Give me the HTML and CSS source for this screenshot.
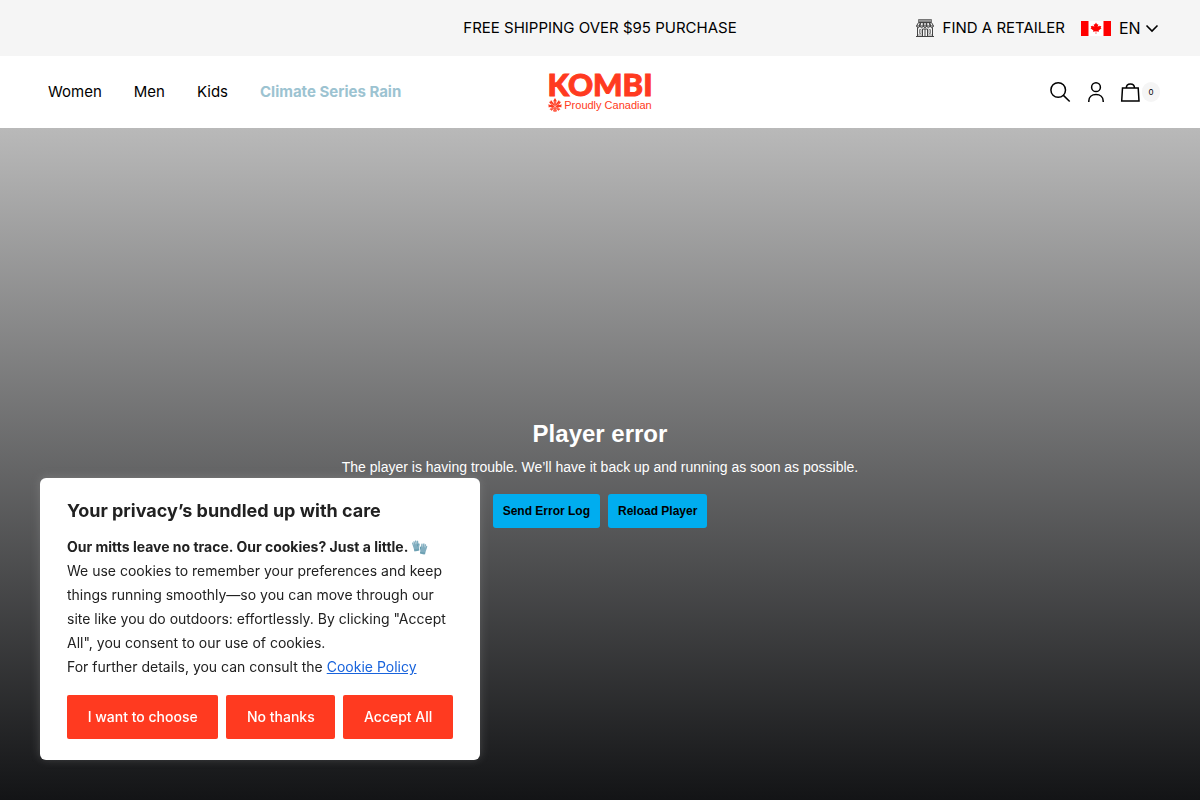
FILE: index.html
```html
<!DOCTYPE html>
<html lang="en">
<head>
  <meta charset="UTF-8">
  <meta name="viewport" content="width=device-width, initial-scale=1.0">
  <title>Kombi</title>
  <link rel="stylesheet" href="styles.css">
</head>
<body>
  <div class="top-bar">
    <p class="announcement">FREE SHIPPING OVER $95 PURCHASE</p>
    <div class="top-links">
      <a class="retailer" href="#">
        <svg class="icon-store" viewBox="0 0 20 20" fill="none" stroke="#444">
          <path d="M3.500 1.500h13v2.500h-13z" fill="#999" stroke="#777"/>
          <path d="M3.500 4.500L1.500 8h17L16.500 4.500z" fill="#eee"/>
          <path d="M5.500 5l-1 3M8.500 5v3M11.500 5v3M14.500 5l1 3" stroke-width="1.600"/>
          <path d="M1.500 8q1.700 3.500 3.400 0q1.700 3.500 3.400 0q1.700 3.500 3.400 0q1.700 3.500 3.400 0q1.700 3.500 3.400 0"/>
          <path d="M2.500 9.500v9M17.500 9.500v9M1 18.500h18M7.500 18v-7h5v7M10 11v7"/>
          <path d="M4.500 11.500h1.500v4H4.500zM14 11.500h1.500v4H14zM3 17h4M13 17h4" stroke="#888"/>
        </svg>
        <span>FIND A RETAILER</span>
      </a>
      <div class="language">
        <svg class="flag" viewBox="0 0 30 15">
          <path fill="#fff" d="M0 0h30v15H0z"/>
          <path fill="#f00" d="M0 0h7.500v15H0zM22.500 0H30v15h-7.500z"/>
          <path fill="#f00" d="M15 1.400l-1.100 2.100-1.200-.6.600 3.100-1.500-1.600-.4.900-1.700-.3.600 1.800-.8.500 2.900 2.300-.4 1.100 2.800-.4-.1 2.800h.6l-.1-2.800 2.800.4-.4-1.100 2.900-2.300-.8-.5.600-1.800-1.700.3-.4-.9L16.700 6l.6-3.100-1.200.6z"/>
        </svg>
        <select class="language-select" aria-label="Language">
          <option>EN</option>
          <option>FR</option>
        </select>
        <svg class="chevron" viewBox="0 0 14 14" fill="none" stroke="#000" stroke-width="1.600"><path d="M1.500 4.500L7 10l5.500-5.500"/></svg>
      </div>
    </div>
  </div>

  <header class="header">
    <nav class="nav">
      <a href="#">Women</a>
      <a href="#">Men</a>
      <a href="#">Kids</a>
      <a class="featured" href="#">Climate Series Rain</a>
    </nav>
    <a class="logo" href="#">
      <span class="logo-name">KOMBI</span>
      <span class="logo-tagline">
        <svg class="leaf" viewBox="0 0 14 14" fill="#ff3a20">
          <path d="M7 0l1.500 2.500L8 6l3-4 .5 1.500L13 4l-2.500 3 3.500-.5-.8 1.500.5 1.200L10 9l2.500 2.500-1.500.3-.5 1.200L8 10l1 3.500-1-.3-1 .8-1-.8-1 .3L6 10l-2.500 3-.5-1.200-1.500-.3L4 9 .3 9.200.8 8 0 6.500l3.500.5L1 4l1.500-.5L3 2l3 4-.5-3.500z"/>
          <path d="M7 3v10M7 8.500L3 5.500M7 8.500l4-3M7 8.500l-4 2.500M7 8.500l4 2.500" fill="none" stroke="#fff" stroke-width=".4"/>
        </svg>
        Proudly Canadian
      </span>
    </a>
    <div class="tools">
      <a href="#" aria-label="Search">
        <svg viewBox="0 0 24 24"><circle cx="10.200" cy="10" r="7.300"/><path d="M15.400 15.400L21.700 21.500"/></svg>
      </a>
      <a href="#" aria-label="Account">
        <svg viewBox="0 0 24 24"><circle cx="12" cy="7.200" r="4.400"/><path d="M4.800 22v-1c0-4 3-6.500 7.200-6.500s7.200 2.500 7.200 6.500v1"/></svg>
      </a>
      <a class="cart" href="#" aria-label="Cart">
        <svg viewBox="0 0 22 24"><path d="M2.500 8h15.700l.8 13H1.700zM6.300 8c0-5.500 8.200-5.500 8.200 0"/></svg>
        <span class="cart-count">0</span>
      </a>
    </div>
  </header>

  <main class="hero">
    <h2 class="error-title">Player error</h2>
    <p class="error-text">The player is having trouble. We’ll have it back up and running as soon as possible.</p>
    <div class="error-actions">
      <button type="button">Send Error Log</button>
      <button type="button">Reload Player</button>
    </div>
  </main>

  <section class="consent" aria-label="Cookie consent">
    <h2 class="consent-title">Your privacy’s bundled up with care</h2>
    <div class="consent-text">
      <p><strong>Our mitts leave no trace. Our cookies? Just a little. 🧤</strong></p>
      <p>We use cookies to remember your preferences and keep things running smoothly—so you can move through our site like you do outdoors: effortlessly. By clicking "Accept All", you consent to our use of cookies.</p>
      <p>For further details, you can consult the <a href="#">Cookie Policy</a></p>
    </div>
    <div class="consent-actions">
      <button type="button">I want to choose</button>
      <button type="button">No thanks</button>
      <button type="button">Accept All</button>
    </div>
  </section>
</body>
</html>
```
FILE: styles.css
```css
* {
  box-sizing: border-box;
}
body {
  margin: 0;
  min-height: 100vh;
  display: flex;
  flex-direction: column;
  font-family: Inter, sans-serif;
  font-size: 15px;
  line-height: 20px;
  color: #000;
}
p, h2 {
  margin: 0;
}
a {
  color: inherit;
  text-decoration: none;
}
button {
  border: 0;
  cursor: pointer;
}
svg {
  display: block;
  flex: none;
}
.top-bar, .header {
  display: grid;
  grid-template-columns: 1fr auto 1fr;
  align-items: center;
  padding: 0 40px;
}
.top-bar {
  height: 56px;
  background: #f5f5f5;
}
.announcement {
  grid-column: 2;
}
.top-links {
  display: flex;
  justify-content: flex-end;
  align-items: center;
  gap: 16px;
}
.retailer {
  display: flex;
  align-items: center;
  gap: 8px;
}
.icon-store {
  width: 20px;
  height: 20px;
}
.language {
  display: flex;
  align-items: center;
  position: relative;
}
.flag {
  width: 30px;
  height: 15px;
}
.language-select {
  appearance: none;
  border: 0;
  margin: 0;
  padding: 0 19px 0 8px;
  background: transparent;
  font-family: inherit;
  font-size: 16px;
  color: #000;
}
.chevron {
  position: absolute;
  right: 1px;
  width: 14px;
  height: 14px;
  pointer-events: none;
}
.header {
  height: 72px;
  background: #fff;
}
.nav {
  display: flex;
  gap: 32px;
  padding-left: 8px;
  white-space: nowrap;
}
.featured {
  font-weight: 700;
  color: #9cc3d1;
}
.logo {
  display: flex;
  flex-direction: column;
  align-items: center;
  color: #ff3a20;
}
.logo-name {
  font-family: Lato, sans-serif;
  font-weight: 900;
  font-size: 31px;
  line-height: 28px;
  -webkit-text-stroke: 1px #ff3a20;
}
.logo-tagline {
  display: flex;
  align-items: center;
  gap: 2px;
  padding-bottom: 2px;
  font-family: "Liberation Sans", sans-serif;
  font-size: 11px;
  line-height: 14px;
}
.leaf {
  width: 14px;
  height: 14px;
}
.tools {
  display: flex;
  justify-content: flex-end;
  align-items: center;
  gap: 12px;
}
.tools svg {
  width: 24px;
  height: 24px;
  fill: none;
  stroke: #000;
  stroke-width: 1.5;
}
.cart {
  display: flex;
  align-items: center;
}
.tools .cart svg {
  width: 22px;
}
.cart-count {
  width: 18px;
  height: 20px;
  border-radius: 10px;
  background: #f5f5f5;
  font-size: 8px;
  text-align: center;
}
.hero {
  flex: 1;
  display: flex;
  flex-direction: column;
  align-items: center;
  justify-content: center;
  padding-top: 20px;
  background: linear-gradient(#b9b9b9, #131416);
  font-family: "Liberation Sans", Arial, sans-serif;
  color: #fff;
}
.error-title {
  font-size: 24px;
  line-height: 28px;
}
.error-text {
  margin: 10px 0 18px;
  font-size: 14px;
  line-height: 18px;
}
.error-actions {
  display: flex;
  gap: 8px;
}
.error-actions button {
  height: 34px;
  padding: 0 10px;
  border-radius: 3px;
  background: #00adef;
  font-family: inherit;
  font-size: 12px;
  font-weight: 700;
  color: #000;
}
.consent {
  position: fixed;
  left: 40px;
  bottom: 40px;
  width: 440px;
  padding: 21px 27px;
  border-radius: 6px;
  background: #fff;
  box-shadow: 0 -1px 10px rgba(172, 171, 171, 0.3);
  color: #212121;
}
.consent-title {
  margin-bottom: 12px;
  font-size: 18px;
  font-weight: 700;
  line-height: 24px;
}
.consent-text {
  margin-bottom: 16px;
  font-size: 14px;
  line-height: 24px;
}
.consent-text a {
  color: #1863dc;
  text-decoration: underline;
}
.consent-actions {
  display: flex;
  gap: 8px;
}
.consent-actions button {
  flex: auto;
  height: 44px;
  padding: 0 20px 2px;
  border-radius: 2px;
  background: #ff3a20;
  font-family: inherit;
  font-size: 14px;
  font-weight: 500;
  color: #fff;
  white-space: nowrap;
}
```
